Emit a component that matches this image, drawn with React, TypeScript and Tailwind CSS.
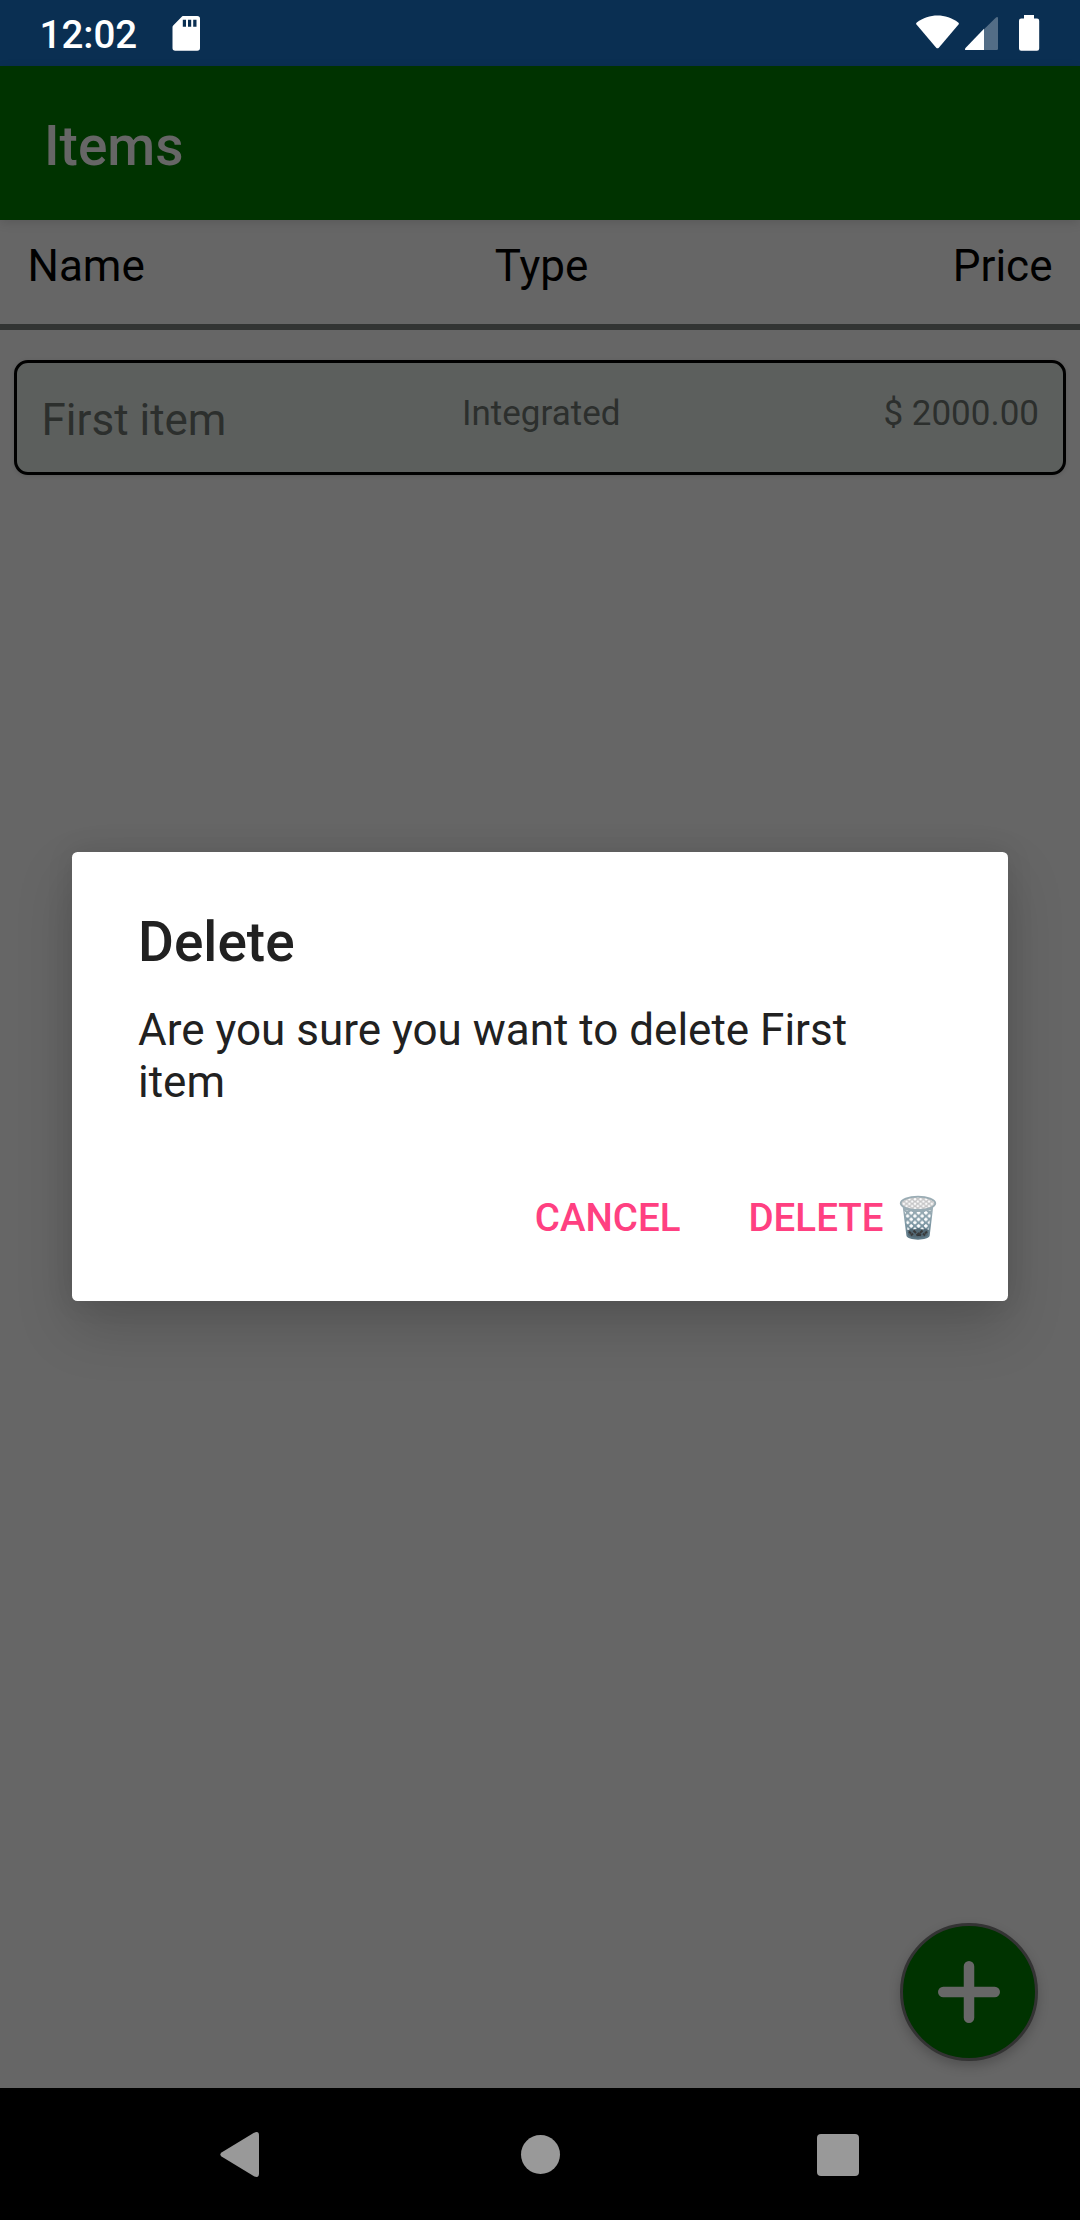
import React from "react";

function StatusBar() {
  return (
    <div className="flex h-[66px] shrink-0 items-start bg-[#0a2f52] text-white">
      <div className="ml-[39.5px] mt-[12px] w-[132.5px] text-[38.5px] leading-[46px] font-medium">12:02</div>
      <svg className="mt-[16px] h-[35px] w-[28px]" viewBox="0 0 28 35" fill="currentColor">
        <path
          fillRule="evenodd"
          d="M11 0H25.2Q28 0 28 2.800V32Q28 34.700 25.200 34.700H3.200Q.5 34.700 .5 32V11.200Q.5 10.200 1.200 9.500L9.500 1Q10.200 0 11 0ZM10.800 3.800V10.800H14V3.800ZM16 3.800V10.800H19.200V3.800ZM21.200 3.800V10.800H24.500V3.800Z"
        />
      </svg>
      <svg className="mt-[14px] ml-auto h-[38px] w-[125px] mr-[40px]" viewBox="0 0 125 38" fill="currentColor">
        <path d="M1.500 10.600Q.600 9.400 1.800 8.400C14-.9 31-.9 43.200 8.400Q44.400 9.400 43.500 10.600L23.800 33.700Q22.500 35 21.200 33.700Z" />
        <path d="M81 3.500Q83 2.200 83 4.500V34.800Q83 36 81.800 36H69V15.200Z" fillOpacity=".3" />
        <path d="M69 14.700V36H51.200Q49 36 50.500 34Z" />
        <path d="M109 1H119V4.500H122Q124.200 4.500 124.200 6.700V34.500Q124.200 36.700 122 36.700H106.200Q104 36.700 104 34.500V6.700Q104 4.500 106.200 4.500H109Z" />
      </svg>
    </div>
  );
}

function TrashIcon() {
  return (
    <svg className="h-[46px] w-[38px]" viewBox="0 0 38 46">
      <defs>
        <linearGradient id="wire" x1="0" y1="0" x2="0" y2="1">
          <stop offset="0" stopColor="#a1b1b8" />
          <stop offset=".5" stopColor="#829ba7" />
          <stop offset="1" stopColor="#5b7684" />
        </linearGradient>
        <pattern id="holes" width="7.300" height="6.600" patternUnits="userSpaceOnUse" x="1.300" y="16">
          <path d="M3.650 0V3.600M1.850 1.800H5.450M0 3.300V6.600M7.300 3.300V6.600M-1.800 5.100H1.800M5.500 5.100H9.100" stroke="#fff" strokeWidth="1.600" />
        </pattern>
        <pattern id="rimHoles" width="5.600" height="4.600" patternUnits="userSpaceOnUse" x="2" y="3">
          <path d="M2.800 0V2.600M1.500 1.300H4.100M0 2.300V4.600M5.600 2.300V4.600M-1.300 3.600H1.300M4.300 3.600H6.900" stroke="#fff" strokeWidth="1.300" />
        </pattern>
      </defs>
      <path d="M3.600 11L7.400 40.500C8 46 30 46 30.700 40.500L34.300 11Z" fill="url(#wire)" />
      <path d="M8.500 34.500Q19 32 29.700 34.500L29 40C27 43.500 11 43.500 9 40Z" fill="#536975" />
      <path d="M5.500 15Q19 19 32.500 15L29.500 35Q19 33 8.500 35Z" fill="url(#holes)" />
      <path d="M10 36.500L12 38.500M14.500 35.500L17 38M21 38L23.500 35.500M26 38.500L28 36.500M12 40.500L14 38.500M17.500 40.500L19.500 38.500L22 40.500M24 38.500L26 40.500" stroke="#393a3b" strokeWidth="2" />
      <ellipse cx="19" cy="8.300" rx="17.500" ry="6.600" fill="#c5c5c6" />
      <ellipse cx="19" cy="8.300" rx="16.500" ry="6" fill="url(#rimHoles)" />
      <ellipse cx="19" cy="8.300" rx="17.300" ry="6.600" fill="none" stroke="#9aacb4" strokeWidth="1.800" />
    </svg>
  );
}

function DeleteDialog() {
  return (
    <div className="absolute top-[852px] left-[72px] flex h-[449px] w-[936px] flex-col rounded-[5.500px] bg-white pt-[58px] pl-[66px] text-[#212121] shadow-[0_26px_56px_rgba(0,0,0,0.17),0_0_28px_rgba(0,0,0,0.09)]">
      <h2 className="text-[55px] leading-[64px] font-medium">Delete</h2>
      <p className="mt-[31px] text-[44px] leading-[51.700px]">
        Are you sure you want to delete First
        <br />
        item
      </p>
      <div className="mt-[87px] flex items-start justify-end pr-[71px] text-[38.500px] leading-[45px] font-medium text-[#ff4081]">
        <button className="mr-[68px]">CANCEL</button>
        <button className="flex">
          <span className="mr-[15.5px]">DELETE</span>
          <TrashIcon />
        </button>
      </div>
    </div>
  );
}

export default function App() {
  return (
    <div className="relative flex h-[2220px] w-[1080px] flex-col overflow-hidden bg-[#666666] font-['Roboto',sans-serif]">
      <StatusBar />
      <header className="z-10 flex h-[154px] shrink-0 items-center bg-[#003300] pt-[6px] pl-[44px] text-[55px] leading-[64px] font-medium text-[#666666] shadow-[0_3px_10px_rgba(0,0,0,0.12)]">
        Items
      </header>
      <main className="flex flex-1 flex-col">
        <div className="grid h-[110px] grid-cols-3 border-b-[6px] border-[#323433] px-[27.500px] pt-5 text-[44px] leading-[52px] text-black">
          <span>Name</span>
          <span className="pl-[3px] text-center">Type</span>
          <span className="text-right">Price</span>
        </div>
        <div className="mx-[14px] mt-[30px] grid h-[115px] grid-cols-3 items-start rounded-[14px] border-[3px] border-black bg-[#5c5f5d] pr-[24px] pl-[24.500px] text-[35px] leading-[42px] text-[#2c2f2d] shadow-[0_1px_4px_rgba(0,0,0,0.12)]">
          <span className="mt-[31px] text-[44px] leading-[52px]">First item</span>
          <span className="mt-[30px] pl-[2px] text-center">Integrated</span>
          <span className="mt-[30px] text-right">$ 2000.00</span>
        </div>
      </main>
      <nav className="flex h-[132px] shrink-0 items-start bg-black">
        <svg className="mt-[44px] ml-[220px] h-[46px] w-[39px]" viewBox="0 0 39 46" fill="#999999">
          <path d="M1.500 20.500L34 .8Q39-1.500 39 3.500V41.500Q39 46.500 34 44.200L1.500 24.500Q-.8 22.500 1.500 20.500Z" />
        </svg>
        <div className="mt-[47px] ml-[262px] size-[39px] rounded-full bg-[#999999]" />
        <div className="mt-[46px] ml-[257px] size-[41.500px] rounded-[4px] bg-[#999999]" />
      </nav>
      <button className="absolute top-[1923px] left-[900px] flex size-[138px] items-center justify-center rounded-full border-[3px] border-[#333333] bg-[#003300] shadow-[0_5px_12px_rgba(0,0,0,0.22)]">
        <svg className="size-[62px]" viewBox="0 0 62 62" fill="none" stroke="#676767" strokeWidth="10.500" strokeLinecap="round">
          <path d="M31 5.250V56.750M5.250 31H56.750" />
        </svg>
      </button>
      <DeleteDialog />
    </div>
  );
}
